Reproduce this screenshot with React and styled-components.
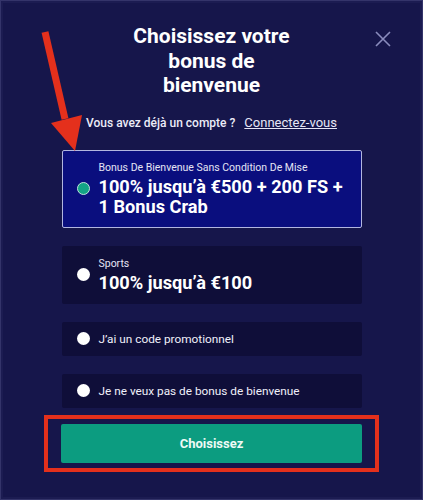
import styled, { createGlobalStyle } from "styled-components";

const GlobalStyle = createGlobalStyle`
  * { box-sizing: border-box; }
  body {
    margin: 0;
    background: #22225a;
    font-family: Roboto, "Liberation Sans", sans-serif;
  }
`;

const Modal = styled.div`
  position: relative;
  width: 423px;
  height: 500px;
  background: #16164b;
  border: 1px solid #34346a;
  outline: 2px solid #1c1c52;
  outline-offset: -3px;
  padding: 23px 0 0;
  display: flex;
  flex-direction: column;
  align-items: center;
  color: #fff;
`;

const Title = styled.h2`
  margin: 0;
  width: 180px;
  text-align: center;
  font-size: 21px;
  line-height: 24.5px;
  font-weight: 700;
`;

const CloseButton = styled.button`
  position: absolute;
  top: 29px;
  right: 30px;
  width: 18px;
  height: 18px;
  padding: 0;
  border: 0;
  background: none;
  cursor: pointer;
`;

const LoginLine = styled.p`
  margin: 17px 0 0;
  font-size: 12px;
  line-height: 16px;
  font-weight: 500;
  color: #ececf8;
  a {
    margin-left: 9px;
    font-size: 13px;
    font-weight: 400;
    color: #e6e6f6;
    text-decoration: underline;
  }
`;

const Options = styled.div`
  margin-top: 19px;
  width: 300px;
  display: flex;
  flex-direction: column;
  gap: 18px;
`;

const Option = styled.label`
  display: flex;
  align-items: center;
  gap: 9px;
  padding: ${(p) => (p.$compact ? "8px 14px" : "10px 14px")};
  background: ${(p) => (p.$active ? "#0a0e7e" : "#0f0e39")};
  border: 1px solid ${(p) => (p.$active ? "#b2b6e0" : "transparent")};
  border-radius: 2px;
  cursor: pointer;
`;

const Radio = styled.span`
  flex: none;
  width: 13px;
  height: 13px;
  border-radius: 50%;
  background: ${(p) => (p.$checked ? "#13a386" : "#fff")};
  border: ${(p) => (p.$checked ? "1.5px solid #bfe3dc" : "none")};
`;

const OptionText = styled.div`
  display: flex;
  flex-direction: column;
  gap: 2px;
`;

const Caption = styled.span`
  font-size: 10.5px;
  line-height: 14px;
  color: #e4e4f4;
`;

const Amount = styled.span`
  font-size: 18.2px;
  line-height: 20px;
  font-weight: 700;
`;

const Plain = styled.span`
  font-size: 11.8px;
  line-height: 16px;
  color: #f0f0fa;
`;

const Highlight = styled.div`
  margin-top: 7px;
  width: 335px;
  padding: 5px 13px;
  border: 4px solid #e4301c;
`;

const SubmitButton = styled.button`
  display: block;
  width: 100%;
  height: 39px;
  border: 0;
  border-radius: 2px;
  background: #0c9c80;
  color: #eefaf6;
  font-family: inherit;
  font-size: 13px;
  font-weight: 700;
  cursor: pointer;
`;

const Pointer = styled.svg`
  position: absolute;
  left: 0;
  top: 0;
  pointer-events: none;
`;

const options = [
  {
    id: "casino",
    caption: "Bonus De Bienvenue Sans Condition De Mise",
    amount: ["100% jusqu’à €500 + 200 FS +", "1 Bonus Crab"],
  },
  { id: "sports", caption: "Sports", amount: ["100% jusqu’à €100"] },
  { id: "promo", label: "J’ai un code promotionnel" },
  { id: "none", label: "Je ne veux pas de bonus de bienvenue" },
];

export default function App() {
  const selected = "casino";
  return (
    <>
      <GlobalStyle />
      <Modal>
        <Title>Choisissez votre bonus de bienvenue</Title>
        <CloseButton aria-label="Fermer">
          <svg width="18" height="18" viewBox="0 0 18 18">
            <path d="M2 2L16 16M16 2L2 16" stroke="#8a8cbd" strokeWidth="1.6" />
          </svg>
        </CloseButton>
        <LoginLine>
          Vous avez déjà un compte ?<a href="#">Connectez-vous</a>
        </LoginLine>
        <Options>
          {options.map((o) => (
            <Option key={o.id} $active={o.id === selected} $compact={!!o.label}>
              <Radio $checked={o.id === selected} />
              {o.label ? (
                <Plain>{o.label}</Plain>
              ) : (
                <OptionText>
                  <Caption>{o.caption}</Caption>
                  <Amount>
                    {o.amount.map((line, i) => (
                      <div key={i}>{line}</div>
                    ))}
                  </Amount>
                </OptionText>
              )}
            </Option>
          ))}
        </Options>
        <Highlight>
          <SubmitButton>Choisissez</SubmitButton>
        </Highlight>
        <Pointer width="100" height="160" viewBox="0 0 100 160">
          <line x1="44" y1="31" x2="64" y2="118" stroke="#e4301c" strokeWidth="7" />
          <polygon points="50,122 81,114 74,150" fill="#e4301c" />
        </Pointer>
      </Modal>
    </>
  );
}
